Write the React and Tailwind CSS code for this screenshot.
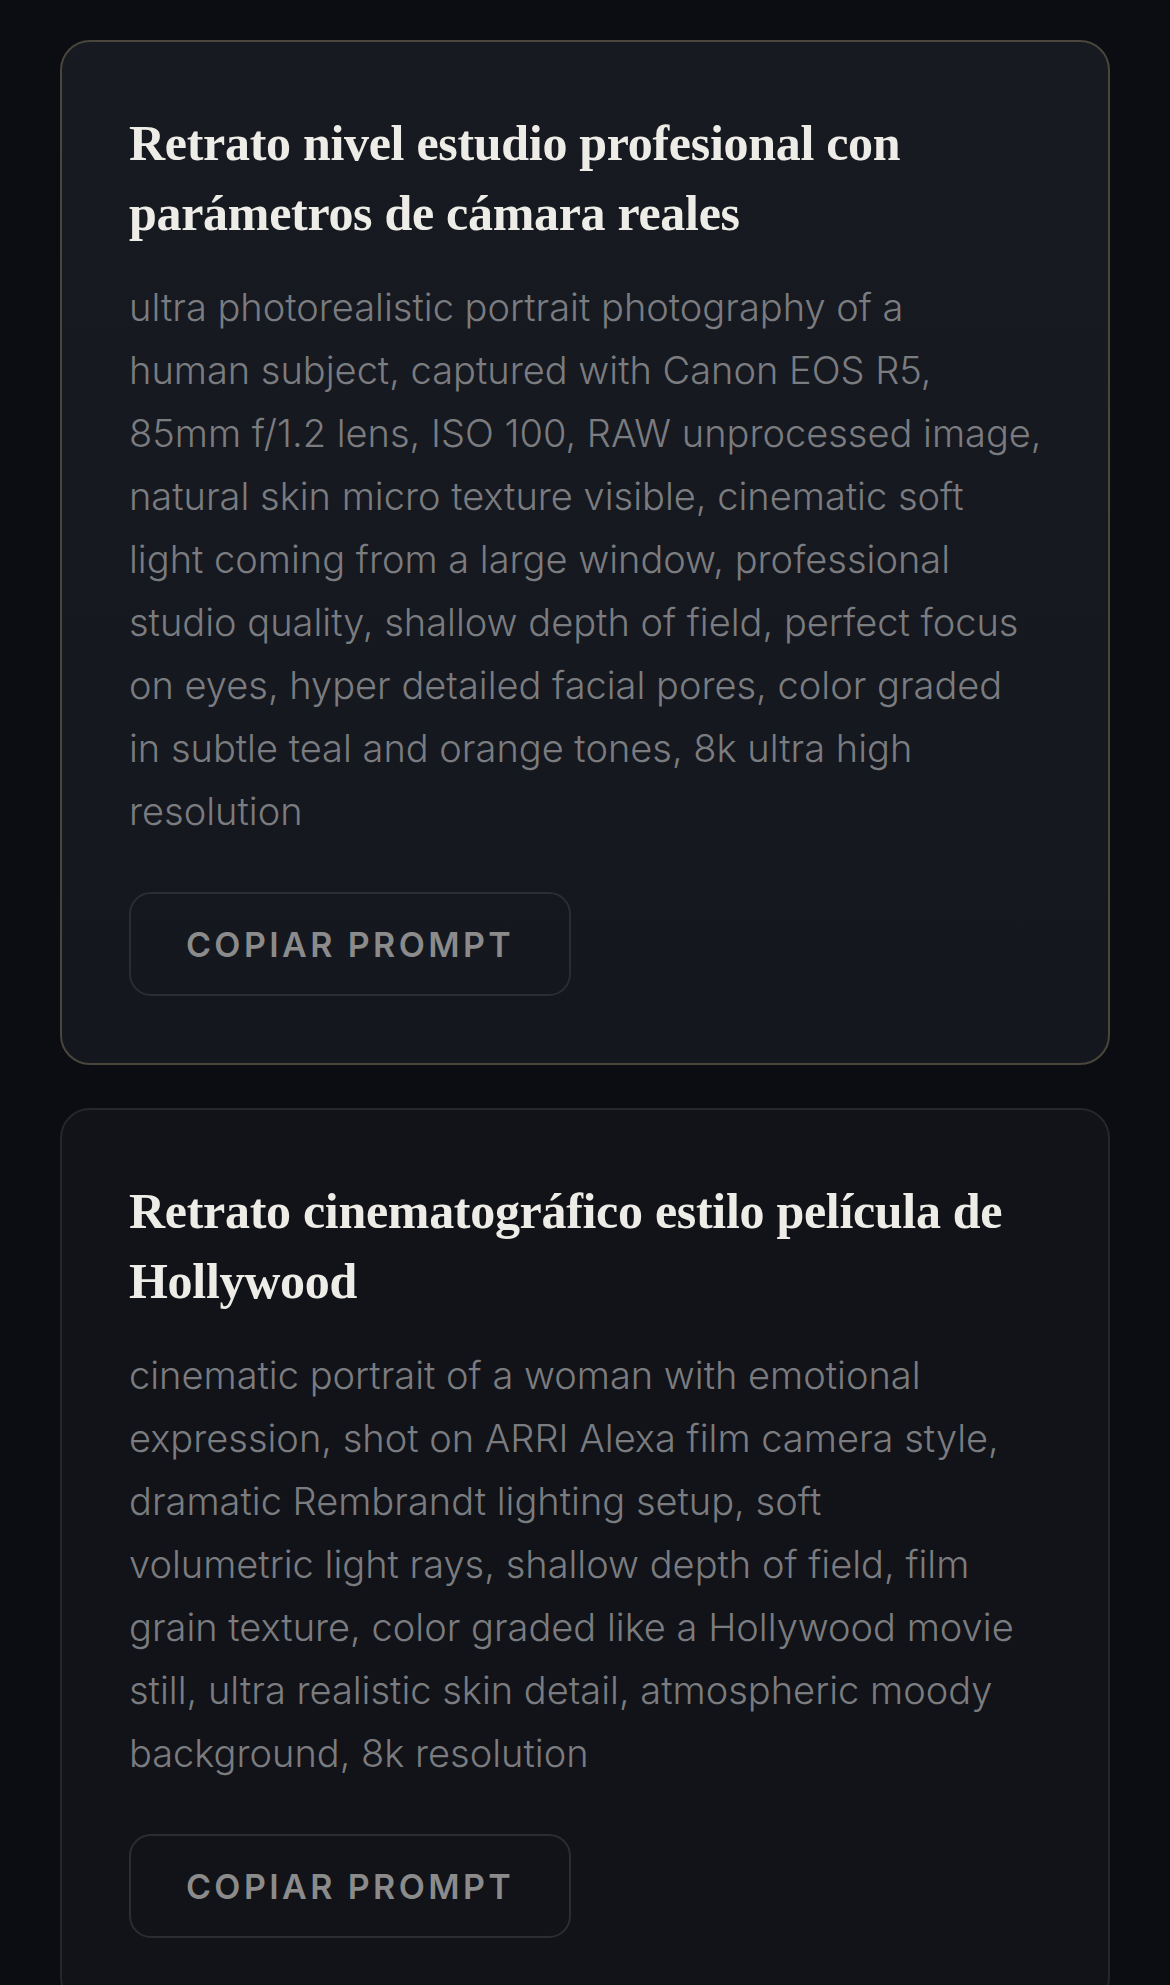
import React from "react";

const cards = [
  {
    active: true,
    title: ["Retrato nivel estudio profesional con", "parámetros de cámara reales"],
    body: [
      "ultra photorealistic portrait photography of a",
      "human subject, captured with Canon EOS R5,",
      "85mm f/1.2 lens, ISO 100, RAW unprocessed image,",
      "natural skin micro texture visible, cinematic soft",
      "light coming from a large window, professional",
      "studio quality, shallow depth of field, perfect focus",
      "on eyes, hyper detailed facial pores, color graded",
      "in subtle teal and orange tones, 8k ultra high",
      "resolution",
    ],
  },
  {
    active: false,
    title: ["Retrato cinematográfico estilo película de", "Hollywood"],
    body: [
      "cinematic portrait of a woman with emotional",
      "expression, shot on ARRI Alexa film camera style,",
      "dramatic Rembrandt lighting setup, soft",
      "volumetric light rays, shallow depth of field, film",
      "grain texture, color graded like a Hollywood movie",
      "still, ultra realistic skin detail, atmospheric moody",
      "background, 8k resolution",
    ],
  },
];

function Card({ card }) {
  return (
    <div
      className={
        "rounded-[30px] border-2 px-[67px] pt-[66px] pb-[67px] " +
        (card.active
          ? "border-[#4a463c] bg-gradient-to-b from-[#171a20] to-[#14171e]"
          : "border-[#25272c] bg-[#111318]")
      }
    >
      <h2
        className="text-[#eeece6] text-[50px] leading-[70px] font-bold tracking-[-0.3px]"
        style={{ fontFamily: '"Liberation Serif", "DejaVu Serif", serif' }}
      >
        {card.title.map((t, i) => (
          <span key={i} className="block whitespace-nowrap">
            {t}
          </span>
        ))}
      </h2>
      <p
        className="mt-[28px] text-[#7b7c80] text-[38px] leading-[63px] font-light"
        style={{ fontFamily: 'Inter, "Noto Sans", sans-serif' }}
      >
        {card.body.map((t, i) => (
          <span key={i} className="block whitespace-nowrap">
            {t}
          </span>
        ))}
      </p>
      <button
        className="mt-[49px] flex h-[104px] w-[442px] items-center justify-center rounded-[22px] border-2 border-[#2b2d33] text-[#8b8b8b] text-[34px] font-semibold tracking-[0.1em]"
        style={{ fontFamily: 'Inter, "Noto Sans", sans-serif' }}
      >
        COPIAR PROMPT
      </button>
    </div>
  );
}

export default function App() {
  return (
    <div className="min-h-[1985px] bg-[#0b0d12] px-[60px] pt-[40px] flex flex-col gap-[43px]">
      {cards.map((c, i) => (
        <Card key={i} card={c} />
      ))}
    </div>
  );
}
